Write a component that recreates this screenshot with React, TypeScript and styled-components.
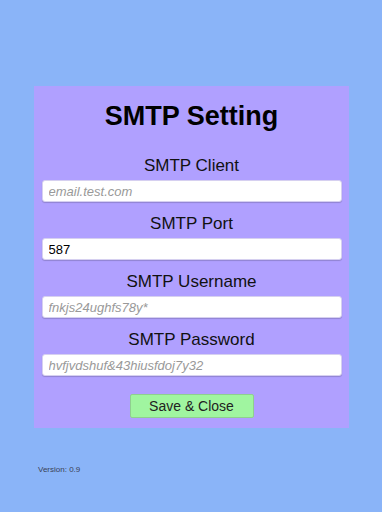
import * as React from 'react';
import styled, { createGlobalStyle } from 'styled-components';

const fields = [
  { label: 'SMTP Client', placeholder: 'email.test.com', value: '' },
  { label: 'SMTP Port', placeholder: '', value: '587' },
  { label: 'SMTP Username', placeholder: 'fnkjs24ughfs78y*', value: '' },
  { label: 'SMTP Password', placeholder: 'hvfjvdshuf&43hiusfdoj7y32', value: '' },
];

const App: React.FC = () => {
  return (
    <Page>
      <GlobalStyle />
      <Panel>
        <Title>SMTP Setting</Title>
        <Fields>
          {fields.map((f) => (
            <Field key={f.label}>
              <Label>{f.label}</Label>
              <Input placeholder={f.placeholder} defaultValue={f.value} />
            </Field>
          ))}
        </Fields>
        <SaveButton>Save &amp; Close</SaveButton>
      </Panel>
      <Version>Version: 0.9</Version>
    </Page>
  );
};
export default App;

const GlobalStyle = createGlobalStyle`
  html, body {
    margin: 0;
    padding: 0;
    background-color: #8ab4f8;
    font-family: "Liberation Sans", Arial, sans-serif;
  }
`;
const Page = styled.div`
  min-height: 100vh;
  padding-top: 86px;
  box-sizing: border-box;
  display: flex;
  flex-direction: column;
  align-items: center;
`;
const Panel = styled.div`
  width: 315px;
  box-sizing: border-box;
  background-color: #b0a0ff;
  padding: 14px 7px 10px 8px;
  display: flex;
  flex-direction: column;
  align-items: center;
`;
const Title = styled.h1`
  margin: 0 0 24px;
  font-size: 27px;
  line-height: 32px;
  font-weight: bold;
  color: #000;
`;
const Fields = styled.div`
  width: 100%;
  display: flex;
  flex-direction: column;
  gap: 12px;
`;
const Field = styled.div`
  display: flex;
  flex-direction: column;
  align-items: center;
  gap: 4px;
`;
const Label = styled.label`
  font-size: 17px;
  line-height: 20px;
  color: #111;
`;
const Input = styled.input`
  width: 100%;
  height: 22px;
  box-sizing: border-box;
  border: 1px solid #d6d0f0;
  border-radius: 3px;
  box-shadow: 0 1px 1px rgba(0, 0, 0, 0.18);
  background: #fff;
  padding: 0 6px;
  font-family: "Liberation Sans", Arial, sans-serif;
  font-size: 13px;
  color: #000;
  outline: none;
  &::placeholder {
    color: #999;
    font-style: italic;
  }
`;
const SaveButton = styled.button`
  margin-top: 18px;
  width: 124px;
  height: 24px;
  background-color: #a0f5a0;
  border: 1px solid #8fcf8f;
  border-radius: 2px;
  font-family: "Liberation Sans", Arial, sans-serif;
  font-size: 14px;
  color: #222;
  padding: 0;
  cursor: pointer;
`;
const Version = styled.div`
  align-self: flex-start;
  margin: 37px 0 0 38px;
  font-size: 8px;
  line-height: 10px;
  color: #3a3f55;
`;
